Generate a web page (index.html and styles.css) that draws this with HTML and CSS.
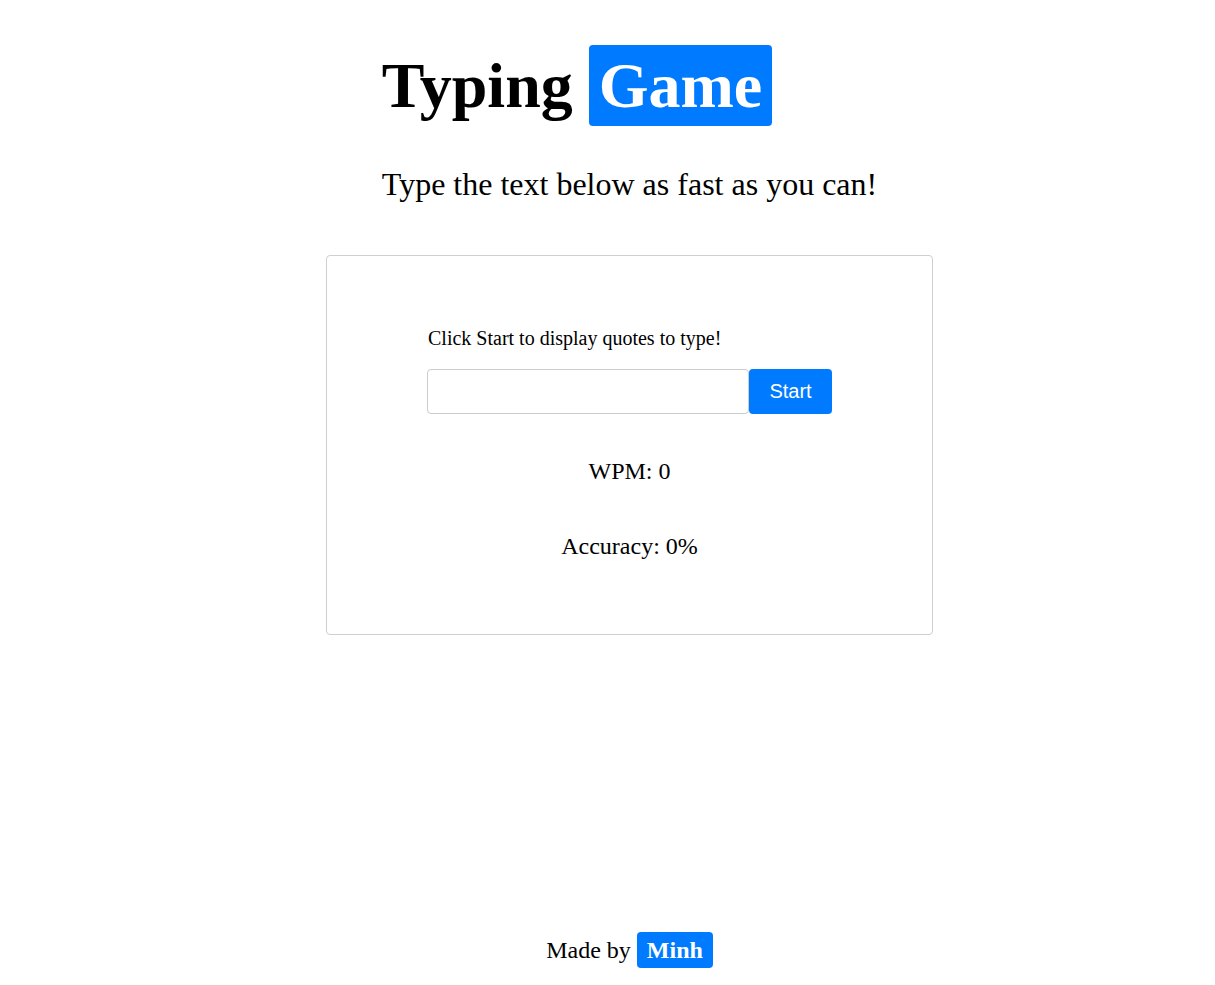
FILE: index.html
```html
<!DOCTYPE html>
<html lang="en">
<head>
<meta charset="utf-8">
<title>Typing Game</title>
<link rel="stylesheet" href="styles.css">
</head>
<body>
  <header class="header">
    <h1 class="title">Typing <span class="badge badge-lg">Game</span></h1>
    <p class="subtitle">Type the text below as fast as you can!</p>
  </header>
  <main class="card">
    <div class="game">
      <p class="quote">Click Start to display quotes to type!</p>
      <div class="controls">
        <input class="type-input" type="text" aria-label="Type here">
        <button class="start-btn" type="button">Start</button>
      </div>
    </div>
    <p class="stat stat-wpm">WPM: 0</p>
    <p class="stat stat-acc">Accuracy: 0%</p>
  </main>
  <footer class="footer">Made by <span class="badge badge-sm">Minh</span></footer>
</body>
</html>
```

FILE: styles.css
```css
html, body {
  margin: 0;
  padding: 0;
}

body {
  font-family: "Liberation Serif", "Times New Roman", serif;
  color: #000;
  background: #fff;
  min-height: 100vh;
  box-sizing: border-box;
  padding-left: 44px;
  display: flex;
  flex-direction: column;
  align-items: center;
}

.header {
  display: flex;
  flex-direction: column;
  align-items: flex-start;
  padding-top: 49px;
}

.title {
  margin: 0;
  font-size: 64px;
  font-weight: 700;
  line-height: normal;
}

.badge {
  display: inline;
  background: #007bff;
  color: #fff;
  border-radius: 4px;
  font-weight: 700;
  padding: 5px 10px;
}

.subtitle {
  margin: 43px 0 0;
  font-size: 32px;
  line-height: normal;
}

.card {
  margin-top: 52px;
  width: 605px;
  border: 1px solid #cfcfcf;
  border-radius: 4px;
  padding: 71px 0 74px;
  display: flex;
  flex-direction: column;
  align-items: center;
}

.game {
  width: 405px;
}

.quote {
  margin: 0 0 19px 1px;
  font-size: 20px;
  line-height: normal;
}

.controls {
  display: flex;
  height: 45px;
}

.type-input {
  box-sizing: border-box;
  width: 322px;
  height: 45px;
  margin: 0;
  border: 1px solid #cccccc;
  border-radius: 4px;
  padding: 0 10px;
  font-size: 18px;
  outline: none;
}

.start-btn {
  box-sizing: border-box;
  width: 83px;
  height: 45px;
  margin: 0;
  border: none;
  border-radius: 4px;
  background: #007bff;
  color: #fff;
  font-family: "Liberation Sans", Arial, sans-serif;
  font-size: 20px;
  padding: 0;
}

.stat {
  margin: 0;
  font-size: 24px;
  line-height: normal;
}

.stat-wpm {
  margin-top: 44px;
}

.stat-acc {
  margin-top: 48px;
}

.footer {
  margin-top: auto;
  padding-bottom: 21px;
  font-size: 24px;
  line-height: normal;
}
```
